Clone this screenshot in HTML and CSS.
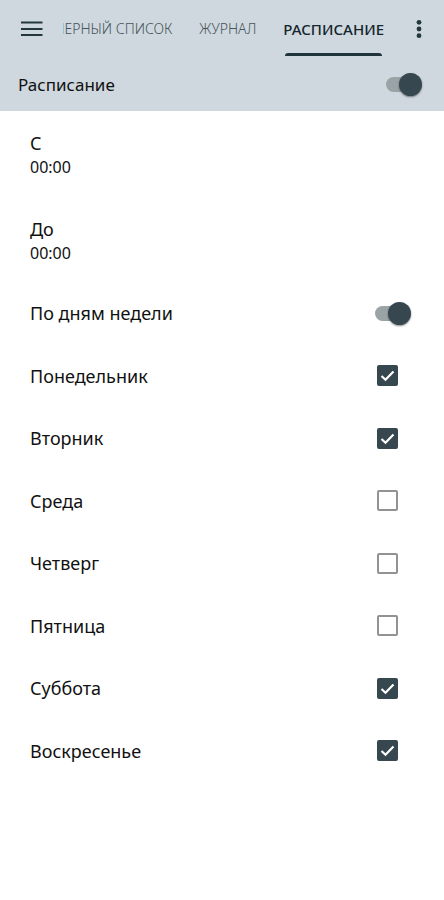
FILE: index.html
```html
<!DOCTYPE html>
<html lang="ru">
<head>
<meta charset="utf-8">
<meta name="viewport" content="width=device-width, initial-scale=1">
<title>Расписание</title>
<link rel="stylesheet" href="styles.css">
</head>
<body>
<header class="header">
  <div class="toolbar">
    <button class="icon-button" type="button" aria-label="Меню">
      <svg width="22" height="16" viewBox="0 0 22 16"><path d="M0 1.500H21.500M0 8H21.500M0 14H21.500" fill="none" stroke="currentColor" stroke-width="2"/></svg>
    </button>
    <nav class="tabs">
      <a class="tab" href="#blacklist">ЧЕРНЫЙ СПИСОК</a>
      <a class="tab" href="#journal">ЖУРНАЛ</a>
      <a class="tab tab-active" href="#schedule" aria-current="page">РАСПИСАНИЕ</a>
    </nav>
    <button class="icon-button" type="button" aria-label="Ещё">
      <svg width="6" height="20" viewBox="0 0 6 20"><g fill="currentColor"><circle cx="3" cy="3.300" r="2.400"/><circle cx="3" cy="10" r="2.400"/><circle cx="3" cy="16.700" r="2.400"/></g></svg>
    </button>
  </div>
  <label class="master"><span>Расписание</span><input class="switch" type="checkbox" role="switch" checked></label>
</header>
<main class="content">
  <button class="time" type="button"><span class="time-label">С</span><span class="time-value">00:00</span></button>
  <button class="time" type="button"><span class="time-label">До</span><span class="time-value">00:00</span></button>
  <div class="days">
    <label class="row"><span>По дням недели</span><input class="switch" type="checkbox" role="switch" checked></label>
    <label class="row"><span>Понедельник</span><input class="check" type="checkbox" checked></label>
    <label class="row"><span>Вторник</span><input class="check" type="checkbox" checked></label>
    <label class="row"><span>Среда</span><input class="check" type="checkbox"></label>
    <label class="row"><span>Четверг</span><input class="check" type="checkbox"></label>
    <label class="row"><span>Пятница</span><input class="check" type="checkbox"></label>
    <label class="row"><span>Суббота</span><input class="check" type="checkbox" checked></label>
    <label class="row"><span>Воскресенье</span><input class="check" type="checkbox" checked></label>
  </div>
</main>
</body>
</html>
```
FILE: styles.css
```css
:root {
  --accent: #36474f;
  --bar: #cfd8de;
  --ink: #111;
}

* {
  box-sizing: border-box;
}

body {
  margin: 0;
  background: #fff;
  color: var(--ink);
  font-family: "Noto Sans", sans-serif;
  font-size: 18px;
  line-height: 24px;
}

button {
  border: 0;
  padding: 0;
  background: none;
  color: inherit;
  font: inherit;
}

.header {
  background: var(--bar);
}

.toolbar {
  display: flex;
  align-items: stretch;
  height: 58px;
  padding: 0 22px 0 21px;
}

.icon-button {
  flex: none;
  display: flex;
  align-items: center;
  color: #24373f;
}

.icon-button svg {
  display: block;
}

.tabs {
  flex: 1;
  min-width: 0;
  display: flex;
  justify-content: flex-end;
  gap: 27px;
  margin: 0 32px 0 20px;
  overflow: hidden;
}

.tab {
  flex: none;
  display: flex;
  align-items: center;
  position: relative;
  color: #46545b;
  font-size: 14px;
  font-weight: 300;
  text-decoration: none;
  white-space: nowrap;
}

.tab-active {
  color: #14262e;
  font-size: 15px;
  font-weight: 500;
}

.tab-active::after {
  content: "";
  position: absolute;
  right: 2px;
  bottom: 2px;
  left: 2px;
  height: 3px;
  border-radius: 3px 3px 0 0;
  background: #1f343d;
}

.master {
  display: flex;
  align-items: center;
  justify-content: space-between;
  height: 53px;
  padding: 0 22px 0 18px;
  font-size: 17px;
}

.content {
  padding-top: 18px;
}

.time {
  display: flex;
  flex-direction: column;
  width: 100%;
  height: 86px;
  padding: 2px 30px;
  text-align: left;
}

.time-value {
  font-size: 16px;
}

.days {
  display: grid;
  grid-auto-rows: 1fr;
  min-height: 500px;
  margin-top: -19px;
}

.row {
  display: flex;
  align-items: center;
  justify-content: space-between;
  padding: 0 33px 0 30px;
}

.check {
  appearance: none;
  width: 21px;
  height: 21px;
  margin: 0 13px 0 0;
  border: 2px solid #929292;
  border-radius: 2px;
}

.check:checked {
  border-color: var(--accent);
  background: var(--accent) url("data:image/svg+xml,%3Csvg xmlns='http://www.w3.org/2000/svg' viewBox='0 0 17 17'%3E%3Cpath d='M2.500 9L6.500 12.800L14.500 4.500' fill='none' stroke='white' stroke-width='2.200'/%3E%3C/svg%3E") center / 17px no-repeat;
}

.switch {
  appearance: none;
  display: flex;
  align-items: center;
  position: relative;
  width: 36px;
  height: 23px;
  margin: 0;
}

.switch::before {
  content: "";
  width: 30px;
  height: 15px;
  border-radius: 8px;
  background: #9aa3a5;
}

.switch::after {
  content: "";
  position: absolute;
  top: 0;
  right: 0;
  width: 23px;
  height: 23px;
  border-radius: 50%;
  background: var(--accent);
  box-shadow: 0 1px 2px rgb(0 0 0 / 45%);
}
```
